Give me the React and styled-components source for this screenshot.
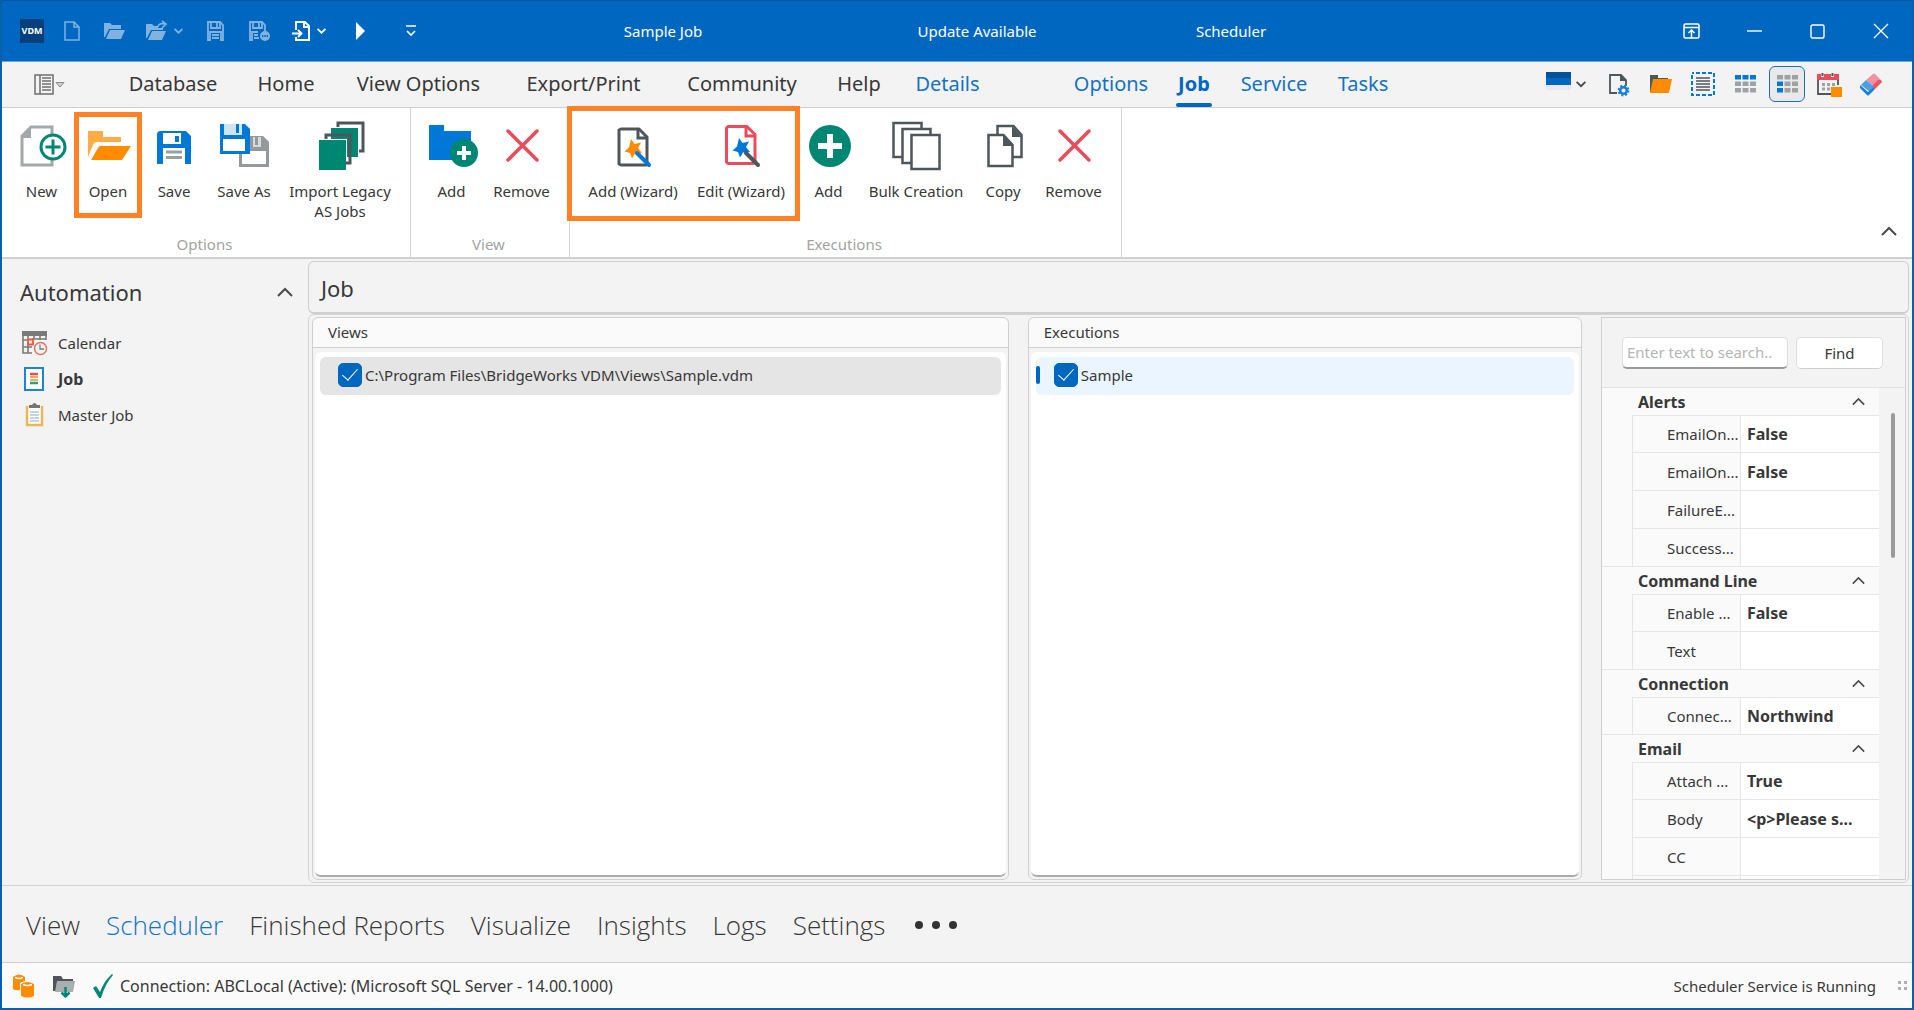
import styled, { createGlobalStyle, css } from "styled-components";
import { useState } from "react";

const GlobalStyle = createGlobalStyle`
  * {
    box-sizing: border-box;
  }
  body {
    margin: 0;
    background: #f3f3f3;
    color: #383838;
    font-family: "Noto Sans", "Open Sans", sans-serif;
    font-size: 15px;
    line-height: 20px;
  }
  button, input {
    font: inherit;
    color: inherit;
  }
  button {
    padding: 0;
    border: 0;
    background: none;
  }
  svg {
    display: block;
    flex: none;
    overflow: visible;
  }
`;

const Window = styled.div`
  display: flex;
  flex-direction: column;
  height: 100vh;
  min-height: 600px;
  border: solid #0a5fae;
  border-width: 0 2px 2px;
`;

/* title bar */

const TitleBar = styled.header`
  display: flex;
  height: 62px;
  flex: none;
  background: #0067c0;
  border-top: 1px solid #00559f;
  border-bottom: 1px solid #6ba6d9;
  color: #ffffff;
`;

const QuickAccess = styled.div`
  display: flex;
  width: 504px;
  padding-left: 12px;
`;

const QuickButton = styled.button`
  display: flex;
  align-items: center;
  justify-content: center;
  gap: 7px;
  width: ${(props) => props.$width}px;
  opacity: ${(props) => (props.$dim ? 0.5 : 1)};
`;

const Logo = styled.span`
  display: flex;
  align-items: center;
  justify-content: center;
  width: 24px;
  height: 24px;
  background: #063f7c;
  font-size: 9px;
  font-weight: 700;
`;

const TitleText = styled.span`
  display: flex;
  align-items: center;
  justify-content: center;
  width: ${(props) => props.$width}px;
`;

const WindowButtons = styled.div`
  display: flex;
  margin-left: auto;
`;

const WindowButton = styled.button`
  display: flex;
  align-items: center;
  justify-content: center;
  width: 63px;
`;

/* ribbon tabs */

const TabBar = styled.nav`
  display: flex;
  height: 46px;
  flex: none;
  border-bottom: 1px solid #cfcfcf;
`;

const AppMenu = styled.button`
  display: flex;
  align-items: center;
  justify-content: center;
  gap: 2px;
  width: 94px;
  margin-right: 13px;
`;

const Tabs = styled.div`
  display: flex;
  margin-right: ${(props) => props.$space || 0}px;
`;

const Tab = styled.button`
  position: relative;
  width: ${(props) => props.$width}px;
  padding-bottom: 2px;
  font-size: 20px;
  white-space: nowrap;
  ${(props) => props.$blue && css`color: #1272c6;`}
  ${(props) =>
    props.$active &&
    css`
      font-weight: 700;
      color: #0067c0;
      &::after {
        content: "";
        position: absolute;
        bottom: 0;
        left: 15px;
        right: 15px;
        height: 4px;
        border-radius: 2px;
        background: #0067c0;
      }
    `}
`;

const ToolIcons = styled.div`
  display: flex;
  align-items: center;
  margin-left: auto;
  padding: 0 20px 1px 0;
`;

const ToolButton = styled.button`
  display: flex;
  align-items: center;
  justify-content: center;
  width: 36px;
  height: 36px;
  margin: 0 3px;
  border: 1px solid transparent;
  border-radius: 6px;
  ${(props) =>
    props.$active &&
    css`
      background: #e9e9e9;
      border-color: #1a70c0;
    `}
`;

const SkinButton = styled.button`
  display: flex;
  align-items: center;
  gap: 5px;
  margin-right: 12px;
`;

/* ribbon */

const Ribbon = styled.section`
  display: flex;
  height: 151px;
  flex: none;
  background: #ffffff;
  border-bottom: 2px solid #d0d0d0;
`;

const Group = styled.div`
  display: flex;
  flex-direction: column;
  justify-content: space-between;
  padding: 14px 0 3px;
  border-right: 1px solid #d4d4d4;
`;

const GroupItems = styled.div`
  display: flex;
  align-items: flex-start;
  padding: 0 ${(props) => props.$right}px 0 ${(props) => props.$left}px;
`;

const GroupTitle = styled.div`
  padding-right: 3px;
  text-align: center;
  color: #a3a3a3;
`;

const RibbonItem = styled.button`
  display: flex;
  flex-direction: column;
  align-items: center;
  gap: 11px;
  width: ${(props) => props.$width}px;
  white-space: pre-line;
`;

const Marked = styled.div`
  position: relative;
  display: flex;
  &::after {
    content: "";
    position: absolute;
    border: 5px solid #ff8125;
    top: ${(props) => props.$inset[0]}px;
    right: ${(props) => props.$inset[1]}px;
    bottom: ${(props) => props.$inset[2]}px;
    left: ${(props) => props.$inset[3]}px;
    pointer-events: none;
  }
`;

const CollapseRibbon = styled.button`
  align-self: flex-end;
  margin: 0 15px 21px auto;
`;

/* workspace */

const Workspace = styled.main`
  display: flex;
  flex: 1;
  min-height: 0;
  padding-bottom: 2px;
  border-bottom: 1px solid #d2d2d2;
`;

const Sidebar = styled.aside`
  width: 306px;
  flex: none;
  padding: 17px 15px 0 18px;
`;

const SidebarHead = styled.div`
  display: flex;
  align-items: center;
  justify-content: space-between;
  height: 32px;
  margin-bottom: 17px;
`;

const Heading = styled.h2`
  margin: 0;
  font-size: 22px;
  font-weight: 400;
`;

const SideLink = styled.a`
  display: flex;
  align-items: center;
  gap: 11px;
  height: 36px;
  padding-left: 2px;
  color: #383838;
  text-decoration: none;
  font-size: ${(props) => (props.$active ? 16 : 15)}px;
  font-weight: ${(props) => (props.$active ? 700 : 400)};
`;

const Content = styled.div`
  display: flex;
  flex-direction: column;
  flex: 1;
  min-width: 0;
  padding: 2px 3px 0 0;
`;

const ContentHead = styled.div`
  display: flex;
  align-items: center;
  height: 53px;
  flex: none;
  padding: 2px 12px 0;
  border: 1px solid #cfcfcf;
  border-bottom-width: 2px;
  border-radius: 6px;
`;

const Panels = styled.div`
  display: flex;
  flex: 1;
  min-height: 0;
  padding: 2px 2px 2px 3px;
  border: 1px solid #d4d4d4;
  border-radius: 6px;
`;

const Panel = styled.section`
  display: flex;
  flex-direction: column;
  flex: ${(props) => props.$grow} 1 0;
  min-width: 0;
  margin-right: 19px;
  border: 1px solid #d0d0d0;
  border-radius: 6px;
`;

const PanelTitle = styled.h3`
  margin: 0;
  padding: 4px 15px 5px;
  border-bottom: 1px solid #d0d0d0;
  border-radius: 6px 6px 0 0;
  background: #fafafa;
  font-size: 15px;
  font-weight: 400;
`;

const PanelList = styled.div`
  flex: 1;
  margin: 4px 2px 2px;
  padding: 5px;
  background: #ffffff;
  border-radius: 6px;
  border-bottom: 2px solid #ababab;
`;

const CheckRow = styled.label`
  display: flex;
  align-items: center;
  gap: 3px;
  height: 38px;
  padding: 0 0 2px 18px;
  border-radius: 6px;
  background: #e5e5e5;
  ${(props) =>
    props.$current &&
    css`
      background: #eaf5ff;
      &::before {
        content: "";
        width: 4px;
        height: 18px;
        margin: 0 11px 0 -18px;
        border-radius: 2px;
        background: #0067c0;
      }
    `}
`;

const CheckBox = styled.input`
  appearance: none;
  display: flex;
  align-items: center;
  justify-content: center;
  width: 24px;
  height: 24px;
  margin: 0;
  border: 1px solid #0067c0;
  border-radius: 5px;
  &:checked {
    background: #0067c0;
  }
  &:checked::after {
    content: "";
    width: 7px;
    height: 14px;
    margin-top: -5px;
    border: solid #ffffff;
    border-width: 0 1px 1px 0;
    transform: rotate(42deg);
  }
`;

/* property grid */

const Properties = styled.section`
  display: flex;
  flex-direction: column;
  width: 305px;
  flex: none;
  border: 1px solid #cfcfcf;
`;

const Search = styled.form`
  display: flex;
  align-items: center;
  gap: 8px;
  height: 70px;
  flex: none;
  padding: 0 22px 0 20px;
  border-bottom: 1px solid #e3e3e3;
`;

const SearchInput = styled.input`
  width: 166px;
  height: 32px;
  padding: 0 4px;
  background: #ffffff;
  border: 1px solid #dedede;
  border-bottom: 2px solid #9a9a9a;
  border-radius: 5px;
  outline: 0;
  &::placeholder {
    color: #b5b5b5;
    opacity: 1;
  }
`;

const FindButton = styled.button`
  flex: 1;
  height: 32px;
  background: #ffffff;
  border: 1px solid #dedede;
  border-bottom-color: #cfcfcf;
  border-radius: 5px;
`;

const GridScroll = styled.div`
  display: flex;
  justify-content: space-between;
  flex: 1;
  min-height: 0;
  overflow: hidden;
`;

const Grid = styled.table`
  width: 277px;
  table-layout: fixed;
  border-collapse: separate;
  border-spacing: 0;
  align-self: flex-start;
  background: #fafafa;
`;

const Category = styled.th`
  height: 27px;
  padding: 0 0 0 36px;
  text-align: left;
  font-size: 16px;
  font-weight: 700;
`;

const CategoryHead = styled.div`
  display: flex;
  align-items: center;
  justify-content: space-between;
  padding-right: 14px;
  line-height: 24px;
`;

const Gutter = styled.td`
  padding: 0;
  border-bottom: ${(props) => (props.$last ? "1px solid #e6e6e6" : 0)};
`;

const PropName = styled.th`
  height: 38px;
  padding: 0 0 0 34px;
  border: solid #e6e6e6;
  border-width: ${(props) => (props.$first ? 1 : 0)}px 1px 1px;
  font-weight: 400;
  text-align: left;
  white-space: nowrap;
`;

const PropValue = styled.td`
  padding: 0 0 0 6px;
  border: solid #e6e6e6;
  border-width: ${(props) => (props.$first ? 1 : 0)}px 0 1px;
  background: #ffffff;
  font-size: 16px;
  font-weight: 700;
  white-space: nowrap;
`;

const ScrollThumb = styled.div`
  width: 4px;
  height: 145px;
  margin: 25px 10px 0 0;
  border-radius: 2px;
  background: #9a9a9a;
`;

/* bottom bars */

const ModuleBar = styled.nav`
  display: flex;
  align-items: center;
  gap: 26px;
  height: 76px;
  flex: none;
  padding: 1px 0 0 24px;
`;

const ModuleLink = styled.a`
  font-family: "Open Sans", "Noto Sans", sans-serif;
  font-size: 26px;
  font-weight: 300;
  line-height: 36px;
  color: ${(props) => (props.$active ? "#1272c6" : "#383838")};
  text-decoration: none;
`;

const MoreModules = styled.button`
  padding-left: 4px;
`;

const StatusBar = styled.footer`
  display: flex;
  align-items: center;
  height: 46px;
  flex: none;
  padding: 0 4px 0 10px;
  background: #fafafa;
  border-top: 1px solid #cfcfcf;
`;

const StatusIcons = styled.div`
  display: flex;
  gap: 18px;
  margin-right: 7px;
`;

const ConnectionState = styled.span`
  font-size: 16px;
`;

const ServiceState = styled.span`
  margin-left: auto;
  margin-right: 21px;
`;

/* icons */

const Chevron = ({ size = 16, up, width = 2, color = "#4a4a4a" }) => (
  <svg width={size} height={size / 2 + 1} viewBox="0 0 16 9" fill="none" stroke={color} strokeWidth={width}>
    <path d={up ? "M1 8l7-7 7 7" : "M1 1l7 7 7-7"} />
  </svg>
);

const quickIcons = {
  page: (
    <svg width="16" height="20" viewBox="0 0 16 20" fill="none" stroke="#fff" strokeWidth="1.5">
      <path d="M1 1h9l5 5v13H1zM10 1v5h5" />
    </svg>
  ),
  folder: (
    <svg width="21" height="18" viewBox="0 0 21 18" fill="#fff">
      <path d="M0 1h6l2 2h9v4H5L1 15H0z" />
      <path d="M6 8h15l-4 9H2z" />
    </svg>
  ),
  folderArrow: (
    <svg width="21" height="20" viewBox="0 0 21 20" fill="#fff">
      <path d="M0 3h6l2 2h4v2h5v2H5L1 17H0z" />
      <path d="M6 10h14l-4 9H2z" />
      <path d="M12 6c0-3 3-4 7-3M16 0l4 3-4 4" fill="none" stroke="#fff" strokeWidth="1.6" />
    </svg>
  ),
  save: (
    <svg width="17" height="20" viewBox="0 0 17 20" fill="none" stroke="#fff" strokeWidth="1.8">
      <path d="M1 1h12l3 3v15h-2v-8H3v8H1z" />
      <path d="M4 1v6h9V1M10 2v4M5 14h7M5 17h7" />
    </svg>
  ),
  saveMore: (
    <svg width="21" height="20" viewBox="0 0 21 20" fill="none" stroke="#fff" strokeWidth="1.8">
      <path d="M9 11H3v8H1V1h12l3 3v6" />
      <path d="M4 1v6h9V1M10 2v4M5 14h4M5 17h5" />
      <circle cx="16" cy="15" r="5" fill="#fff" stroke="none" />
      <path d="M13 15h1.3m1 0h1.3m1 0H19" stroke="#0067c0" />
    </svg>
  ),
  importPage: (
    <svg width="18" height="20" viewBox="0 0 18 20" fill="none" stroke="#fff" strokeWidth="1.9">
      <path d="M4 9V1h9l4 4v14H4v-3M12 1v5h5M0 12.500h9M6 9l3.500 3.500L6 16" />
    </svg>
  ),
  play: (
    <svg width="9" height="18" viewBox="0 0 9 18" fill="#fff">
      <path d="M0 0l9 9-9 9z" />
    </svg>
  ),
  customize: (
    <svg width="10" height="12" viewBox="0 0 10 12" fill="none" stroke="#fff" strokeWidth="1.6">
      <path d="M0 1h10M1 6l4 4 4-4" />
    </svg>
  ),
};

const starPath = "M-2-9l3.500 5 6.500-1.500-3 5.500 4 5-7 .5-3 5-2-5.500-5.500-1.500 4.500-4z";

const ribbonIcons = {
  newPage: (
    <>
      <path d="M34 12V5H13L4 14v29h30v-5" fill="none" stroke="#a3a8aa" strokeWidth="3" />
      <path d="M13 4v12H3z" fill="#a3a8aa" />
      <circle cx="35" cy="25" r="12" fill="#fff" stroke="#008774" strokeWidth="3" />
      <path d="M35 17.500v15M27.500 25h15" stroke="#008774" strokeWidth="3" />
    </>
  ),
  open: (
    <>
      <path d="M4 9h15v6h18v5H13c-2 0-3 1-4 3L4 35z" fill="#ffac45" />
      <path d="M17 24h30L38 38H7l7-12c1-2 2-2 3-2z" fill="#ff8c00" />
    </>
  ),
  save: (
    <>
      <path d="M11 9h25l5 5v28h-6V26H13v16H7V13c0-3 1-4 4-4z" fill="#0078d7" />
      <path d="M13 11h18v11H13z" fill="#fff" />
      <path d="M25 14h4v6h-4z" fill="#0078d7" />
      <path d="M16 30h16M16 35.500h16" stroke="#9a9fa1" strokeWidth="3" />
    </>
  ),
  saveAs: (
    <>
      <path d="M20.500 32v11.500h27V21L42 15.500H32" fill="#fff" stroke="#94999c" strokeWidth="3" />
      <path d="M30 14h13l6 6v9H30z" fill="#94999c" />
      <path d="M33 15h8v10h-8z" fill="#d8dadb" />
      <path d="M35 15h3v8h-3z" fill="#94999c" />
      <path d="M0 2h25l5 5v25H0z" fill="#0078d7" />
      <path d="M4 2h18v11H4z" fill="#cfe4f7" />
      <path d="M16 2h3v9h-3z" fill="#0078d7" />
      <path d="M3 17h22v12H3z" fill="#fff" />
    </>
  ),
  importJobs: (
    <>
      <path d="M22 5V1h25v28h-4" fill="none" stroke="#4d565b" strokeWidth="3" />
      <path d="M15 6h27v29H31V17H15z" fill="#008774" />
      <path d="M10 17v-4h24v28h-4" fill="none" stroke="#4d565b" strokeWidth="3" />
      <path d="M3 18h27v30H3z" fill="#008774" />
    </>
  ),
  folderAdd: (
    <>
      <path d="M1 3h15v6h27v29H1z" fill="#0078d7" />
      <circle cx="36" cy="31" r="14" fill="#008774" />
      <path d="M36 24v14M29 31h14" stroke="#fff" strokeWidth="4" />
    </>
  ),
  remove: (
    <path d="M10 9l29 29M39 9L10 38" stroke="#ea4c5b" strokeWidth="3.500" strokeLinecap="round" />
  ),
  addWizard: (
    <>
      <path d="M12 7h18l8 8v27c0 1-1 1-1 1H12l-2-1V8z" fill="#fff" stroke="#4d565b" strokeWidth="3" strokeLinejoin="round" />
      <path d="M29 7v9h9" fill="none" stroke="#4d565b" strokeWidth="3" />
      <path d={starPath} fill="#ff8c00" transform="translate(24 26)" />
      <path d="M28 31l12 12" stroke="#0078d7" strokeWidth="4" strokeLinecap="round" />
    </>
  ),
  editWizard: (
    <>
      <path d="M11 4.500h19l8 8V40l-2 1.500H11L9.500 40V6z" fill="#fff" stroke="#ea4c5b" strokeWidth="3" strokeLinejoin="round" />
      <path d="M29 5v9h9" fill="none" stroke="#ea4c5b" strokeWidth="3" />
      <path d={starPath} fill="#0078d7" transform="translate(24 25)" />
      <path d="M29 31l12 12" stroke="#4d565b" strokeWidth="4" strokeLinecap="round" />
    </>
  ),
  addCircle: (
    <>
      <circle cx="25" cy="24" r="21" fill="#008774" />
      <path d="M25 12v24M13 24h24" stroke="#fff" strokeWidth="6" />
    </>
  ),
  bulk: (
    <g fill="#fff" stroke="#4d565b" strokeWidth="2.500">
      <path d="M1.500 1h28v34h-28z" />
      <path d="M10.500 7h28v34h-28z" />
      <path d="M19.500 13h28v34h-28z" />
    </g>
  ),
  copy: (
    <>
      <path d="M18.500 4h16l8 9v22h-24z" fill="#fff" stroke="#4d565b" strokeWidth="2.500" />
      <path d="M33 4l10 11H33z" fill="#4d565b" />
      <path d="M9.500 13h15l9 10v21h-24z" fill="#fff" stroke="#4d565b" strokeWidth="2.500" />
      <path d="M24 13l10 11H24z" fill="#4d565b" />
    </>
  ),
};

const Cells = ({ blue }) => (
  <svg width="21" height="18" viewBox="0 0 21 18">
    {[0, 1, 2].map((row) =>
      [0, 1, 2].map((col) => (
        <rect
          key={`${row}${col}`}
          x={col * 7.5}
          y={row * 6.5}
          width="6"
          height="4.500"
          fill={blue(row, col) ? "#0078d7" : "#9ea2a4"}
        />
      ))
    )}
  </svg>
);

const toolIcons = [
  {
    label: "Page Settings",
    icon: (
      <svg width="22" height="24" viewBox="0 0 22 24">
        <path d="M9 21H2V3h11l5 5v6" fill="none" stroke="#4d565b" strokeWidth="1.8" />
        <path d="M12 2l7 7h-7z" fill="#4d565b" />
        <circle cx="15.500" cy="18.500" r="3.300" fill="none" stroke="#1a7fd8" strokeWidth="2.600" />
        <circle cx="15.500" cy="18.500" r="4.900" fill="none" stroke="#1a7fd8" strokeWidth="2" strokeDasharray="2 1.850" />
      </svg>
    ),
  },
  {
    label: "Open Folder",
    icon: (
      <svg width="22" height="20" viewBox="0 0 22 20">
        <path d="M0 1h8v3h10v3H5L1 18H0z" fill="#4d565b" />
        <path d="M3 5h19l-3 14H0z" fill="#ff8c00" />
      </svg>
    ),
  },
  {
    label: "Select All",
    icon: (
      <svg width="24" height="24" viewBox="0 0 24 24">
        <rect x="1" y="1" width="22" height="22" fill="none" stroke="#0078d7" strokeWidth="2" strokeDasharray="4 2" strokeDashoffset="2" />
        <path d="M5 6h14M5 9h14M5 12h14M5 15h14M5 18h14" stroke="#4d565b" strokeWidth="1.600" />
      </svg>
    ),
  },
  { label: "Header Row", icon: <Cells blue={(row) => row === 0} /> },
  { label: "First Column", active: true, icon: <Cells blue={(row, col) => row > 0 && col === 0} /> },
  {
    label: "Calendar",
    icon: (
      <svg width="25" height="25" viewBox="0 0 25 25">
        <path d="M1 7v15h13M21 7v6" fill="none" stroke="#4d565b" strokeWidth="1.800" />
        <path d="M0 2h4v3h3V2h7v3h3V2h5v6H0z" fill="#ea4c5b" />
        <path d="M5.500 1v3M15.500 1v3" stroke="#4d565b" strokeWidth="2" />
        <path d="M5 12.500h13M5 17h8" stroke="#9ea2a4" strokeWidth="3" strokeDasharray="3 2" />
        <path d="M14 15h11v10H14z" fill="#ff8c00" />
      </svg>
    ),
  },
  {
    label: "Clear",
    icon: (
      <svg width="22" height="22" viewBox="0 0 22 22">
        <path d="M13 1q1-1 2 0l6 6-7 7-8-7z" fill="#f391a0" />
        <path d="M21 7l1 2-8 8-3-3 7-7z" fill="#ea5566" />
        <path d="M6 7l8 7-4 5-9-7z" fill="#4aa0e6" />
        <path d="M14 14v3l-5 5q-1 1-2 0l-7-7v-3l8 7z" fill="#1a7fd8" />
      </svg>
    ),
  },
];

const sideIcons = {
  Calendar: (
    <svg width="25" height="24" viewBox="0 0 25 24" fill="none">
      <path d="M0 0h25v5H0z" fill="#7a7a7a" />
      <path d="M1 4v18h9M24 4v5M6 5v4M12 5v3M18 5v4M1 9h4M10 8h14M1 16h9M6 12v10" stroke="#7a7a7a" strokeWidth="1.600" />
      <path d="M6 8.500h5v5H6z" stroke="#e4583c" strokeWidth="1.800" />
      <circle cx="18.500" cy="17.500" r="6" fill="#f3f3f3" stroke="#e4735c" strokeWidth="1.500" />
      <path d="M18 13.500V18h4" stroke="#7a7a7a" strokeWidth="1.300" />
    </svg>
  ),
  Job: (
    <svg width="25" height="24" viewBox="0 0 25 24">
      <path d="M3 1h18v22H3z" fill="#fff" stroke="#1a85d8" strokeWidth="2" />
      <path d="M8 7h8" stroke="#ea4c5b" strokeWidth="2.500" />
      <path d="M8 10h8" stroke="#f8a060" strokeWidth="2" />
      <path d="M8 13h8" stroke="#ffac45" strokeWidth="2" />
      <path d="M8 16h8" stroke="#2f9d82" strokeWidth="2.500" />
    </svg>
  ),
  "Master Job": (
    <svg width="25" height="24" viewBox="0 0 25 24">
      <path d="M5 3v19h15V3" fill="#fff" stroke="#ecb753" strokeWidth="2.500" />
      <path d="M7 5V2h3q2.500-4 5 0h3v3z" fill="#757575" />
      <path d="M8 9h9M8 12h9M8 15h9M8 18h9" stroke="#b3c6dc" strokeWidth="1.600" />
    </svg>
  ),
};

const tabs = [
  ["Database", 128],
  ["Home", 98],
  ["View Options", 167],
  ["Export/Print", 163],
  ["Community", 154],
  ["Help", 80],
  ["Details", 97],
];

const contextTabs = [
  ["Options", 100],
  ["Job", 66],
  ["Service", 94],
  ["Tasks", 84],
];

const properties = [
  {
    name: "Alerts",
    rows: [["EmailOn...", "False"], ["EmailOn...", "False"], ["FailureE...", ""], ["Success...", ""]],
  },
  { name: "Command Line", rows: [["Enable ...", "False"], ["Text", ""]] },
  { name: "Connection", rows: [["Connec...", "Northwind"]] },
  { name: "Email", rows: [["Attach ...", "True"], ["Body", "<p>Please s..."], ["CC", ""], ["", ""]] },
];

const modules = ["View", "Scheduler", "Finished Reports", "Visualize", "Insights", "Logs", "Settings"];

const RibbonButton = ({ icon, label, width }) => (
  <RibbonItem $width={width}>
    <svg width="48" height="48" viewBox="0 0 48 48">
      {ribbonIcons[icon]}
    </svg>
    {label}
  </RibbonItem>
);

const PropertyGroup = ({ name, rows }) => (
  <tbody>
    <tr>
      <Category colSpan={3} scope="rowgroup">
        <CategoryHead>
          {name}
          <button aria-label={`Collapse ${name}`}>
            <Chevron up size={13} />
          </button>
        </CategoryHead>
      </Category>
    </tr>
    {rows.map(([label, value], i) => (
      <tr key={i}>
        <Gutter $last={i === rows.length - 1} />
        <PropName scope="row" $first={i === 0}>{label}</PropName>
        <PropValue $first={i === 0}>{value}</PropValue>
      </tr>
    ))}
  </tbody>
);

const App = () => {
  const [viewChecked, setViewChecked] = useState(true);
  const [executionChecked, setExecutionChecked] = useState(true);

  return (
    <Window>
      <GlobalStyle />
      <TitleBar>
        <QuickAccess>
          <QuickButton $width={36}><Logo>VDM</Logo></QuickButton>
          <QuickButton $width={44} $dim aria-label="New">{quickIcons.page}</QuickButton>
          <QuickButton $width={40} $dim aria-label="Open">{quickIcons.folder}</QuickButton>
          <QuickButton $width={60} $dim aria-label="Open Recent">
            {quickIcons.folderArrow}
            <Chevron size={9} width={3} color="#fff" />
          </QuickButton>
          <QuickButton $width={42} $dim aria-label="Save">{quickIcons.save}</QuickButton>
          <QuickButton $width={46} $dim aria-label="Save As">{quickIcons.saveMore}</QuickButton>
          <QuickButton $width={54} aria-label="Import">
            {quickIcons.importPage}
            <Chevron size={9} width={3} color="#fff" />
          </QuickButton>
          <QuickButton $width={48} aria-label="Run">{quickIcons.play}</QuickButton>
          <QuickButton $width={54} aria-label="Customize">{quickIcons.customize}</QuickButton>
        </QuickAccess>
        <TitleText $width={314}>Sample Job</TitleText>
        <TitleText $width={314}>Update Available</TitleText>
        <TitleText $width={194}>Scheduler</TitleText>
        <WindowButtons>
          <WindowButton aria-label="Ribbon Display">
            <svg width="17" height="16" viewBox="0 0 17 16" fill="none" stroke="#fff" strokeWidth="1.500">
              <rect x="1" y="1" width="15" height="14" rx="1.500" />
              <path d="M1 4.500h15M8.500 15V8M5.500 10l3-3 3 3" />
            </svg>
          </WindowButton>
          <WindowButton aria-label="Minimize">
            <svg width="15" height="2" viewBox="0 0 15 2"><path d="M0 1h15" stroke="#fff" strokeWidth="1.400" /></svg>
          </WindowButton>
          <WindowButton aria-label="Maximize">
            <svg width="15" height="15" viewBox="0 0 15 15" fill="none" stroke="#fff" strokeWidth="1.400">
              <rect x="1" y="1" width="13" height="13" rx="1.500" />
            </svg>
          </WindowButton>
          <WindowButton aria-label="Close">
            <svg width="16" height="16" viewBox="0 0 16 16" stroke="#fff" strokeWidth="1.400">
              <path d="M1 1l14 14M15 1L1 15" />
            </svg>
          </WindowButton>
        </WindowButtons>
      </TitleBar>

      <TabBar>
        <AppMenu aria-label="Application Menu">
          <svg width="20" height="21" viewBox="0 0 20 21" fill="none" stroke="#6f6f6f" strokeWidth="1.500">
            <path d="M1 1h18v19H1zM6 1v19M8 4h9M8 7h9M8 10h9M8 13h9M8 16h9" />
          </svg>
          <svg width="8" height="6" viewBox="0 0 8 6" fill="#d0d0d0" stroke="#8a8a8a">
            <path d="M0 .500h8L4 5z" />
          </svg>
        </AppMenu>
        <Tabs $space={65}>
          {tabs.map(([label, width]) => (
            <Tab key={label} $width={width} $blue={label === "Details"}>{label}</Tab>
          ))}
        </Tabs>
        <Tabs>
          {contextTabs.map(([label, width]) => (
            <Tab key={label} $width={width} $blue $active={label === "Job"}>{label}</Tab>
          ))}
        </Tabs>
        <ToolIcons>
          <SkinButton aria-label="Skin">
            <svg width="25" height="24" viewBox="0 0 25 24">
              <path d="M0 0h25v6H0z" fill="#00529b" />
              <path d="M0 6h25v7H0z" fill="#0067c0" />
              <path d="M0 13h25v5H0z" fill="#e9e9e9" />
            </svg>
            <Chevron size={10} width={3} />
          </SkinButton>
          {toolIcons.map((item) => (
            <ToolButton key={item.label} $active={item.active} aria-label={item.label}>
              {item.icon}
            </ToolButton>
          ))}
        </ToolIcons>
      </TabBar>

      <Ribbon>
        <Group>
          <GroupItems $left={6} $right={11}>
            <RibbonButton icon="newPage" label="New" width={67} />
            <Marked $inset={[-10, -1, -17, -1]}>
              <RibbonButton icon="open" label="Open" width={66} />
            </Marked>
            <RibbonButton icon="save" label="Save" width={66} />
            <RibbonButton icon="saveAs" label="Save As" width={74} />
            <RibbonButton icon="importJobs" label={"Import Legacy\nAS Jobs"} width={118} />
          </GroupItems>
          <GroupTitle>Options</GroupTitle>
        </Group>
        <Group>
          <GroupItems $left={4} $right={14}>
            <RibbonButton icon="folderAdd" label="Add" width={73} />
            <RibbonButton icon="remove" label="Remove" width={67} />
          </GroupItems>
          <GroupTitle>View</GroupTitle>
        </Group>
        <Group>
          <GroupItems $left={9} $right={10}>
            <Marked $inset={[-16, -5, -20, -12]}>
              <RibbonButton icon="addWizard" label="Add (Wizard)" width={108} />
              <RibbonButton icon="editWizard" label="Edit (Wizard)" width={108} />
            </Marked>
            <RibbonButton icon="addCircle" label="Add" width={67} />
            <RibbonButton icon="bulk" label="Bulk Creation" width={108} />
            <RibbonButton icon="copy" label="Copy" width={66} />
            <RibbonButton icon="remove" label="Remove" width={75} />
          </GroupItems>
          <GroupTitle>Executions</GroupTitle>
        </Group>
        <CollapseRibbon aria-label="Collapse Ribbon">
          <Chevron up />
        </CollapseRibbon>
      </Ribbon>

      <Workspace>
        <Sidebar>
          <SidebarHead>
            <Heading>Automation</Heading>
            <button aria-label="Collapse Automation">
              <Chevron up />
            </button>
          </SidebarHead>
          {Object.keys(sideIcons).map((name) => (
            <SideLink key={name} href="#" $active={name === "Job"}>
              {sideIcons[name]}
              {name}
            </SideLink>
          ))}
        </Sidebar>
        <Content>
          <ContentHead>
            <Heading>Job</Heading>
          </ContentHead>
          <Panels>
            <Panel $grow={697}>
              <PanelTitle>Views</PanelTitle>
              <PanelList>
                <CheckRow>
                  <CheckBox
                    type="checkbox"
                    checked={viewChecked}
                    onChange={(e) => setViewChecked(e.target.checked)}
                  />
                  C:\Program Files\BridgeWorks VDM\Views\Sample.vdm
                </CheckRow>
              </PanelList>
            </Panel>
            <Panel $grow={554}>
              <PanelTitle>Executions</PanelTitle>
              <PanelList>
                <CheckRow $current>
                  <CheckBox
                    type="checkbox"
                    checked={executionChecked}
                    onChange={(e) => setExecutionChecked(e.target.checked)}
                  />
                  Sample
                </CheckRow>
              </PanelList>
            </Panel>
            <Properties>
              <Search onSubmit={(e) => e.preventDefault()}>
                <SearchInput aria-label="Search properties" placeholder="Enter text to search.." />
                <FindButton>Find</FindButton>
              </Search>
              <GridScroll>
                <Grid>
                  <colgroup>
                    <col width="30" />
                    <col width="109" />
                    <col width="138" />
                  </colgroup>
                  {properties.map((group) => (
                    <PropertyGroup key={group.name} {...group} />
                  ))}
                </Grid>
                <ScrollThumb />
              </GridScroll>
            </Properties>
          </Panels>
        </Content>
      </Workspace>

      <ModuleBar>
        {modules.map((name) => (
          <ModuleLink key={name} href="#" $active={name === "Scheduler"}>{name}</ModuleLink>
        ))}
        <MoreModules aria-label="More">
          <svg width="42" height="8" viewBox="0 0 42 8" fill="#333">
            <circle cx="4" cy="4" r="4" />
            <circle cx="21" cy="4" r="4" />
            <circle cx="38" cy="4" r="4" />
          </svg>
        </MoreModules>
      </ModuleBar>

      <StatusBar>
        <StatusIcons>
          <svg width="23" height="24" viewBox="0 0 23 24" fill="#ff8c00">
            <path d="M1 3q6-5 12 0v4q-5 1-5 3v6q-5 1-7-1z" />
            <path d="M9 10q6-4 13 0v12q-6 3-13 0z" />
            <path d="M3 3.500q4 2 8 0M11 10.500q4 2 9 0" stroke="#fff" strokeWidth="1.500" fill="none" />
          </svg>
          <svg width="22" height="24" viewBox="0 0 22 24">
            <path d="M0 2h8l2 3h10v3H4v9H0z" fill="#4d565b" />
            <path d="M4 7h18l-2 11H2z" fill="#a9aeb0" />
            <path d="M12.500 13v9M8.500 18.500l4 4 4-4" stroke="#008774" strokeWidth="2.500" fill="none" />
          </svg>
          <svg width="20" height="24" viewBox="0 0 20 24" fill="#008774">
            <path d="M0 14l3-2 4 6Q11 7 19 0l1 1Q12 10 8 24H6z" />
          </svg>
        </StatusIcons>
        <ConnectionState>Connection: ABCLocal (Active): (Microsoft SQL Server - 14.00.1000)</ConnectionState>
        <ServiceState>Scheduler Service is Running</ServiceState>
        <svg width="11" height="10" viewBox="0 0 11 10" fill="#b0b0b0">
          <path d="M1 0h3v3H1zM7 0h3v3H7zM1 6h3v3H1zM7 6h3v3H7z" />
        </svg>
      </StatusBar>
    </Window>
  );
};

export default App;
